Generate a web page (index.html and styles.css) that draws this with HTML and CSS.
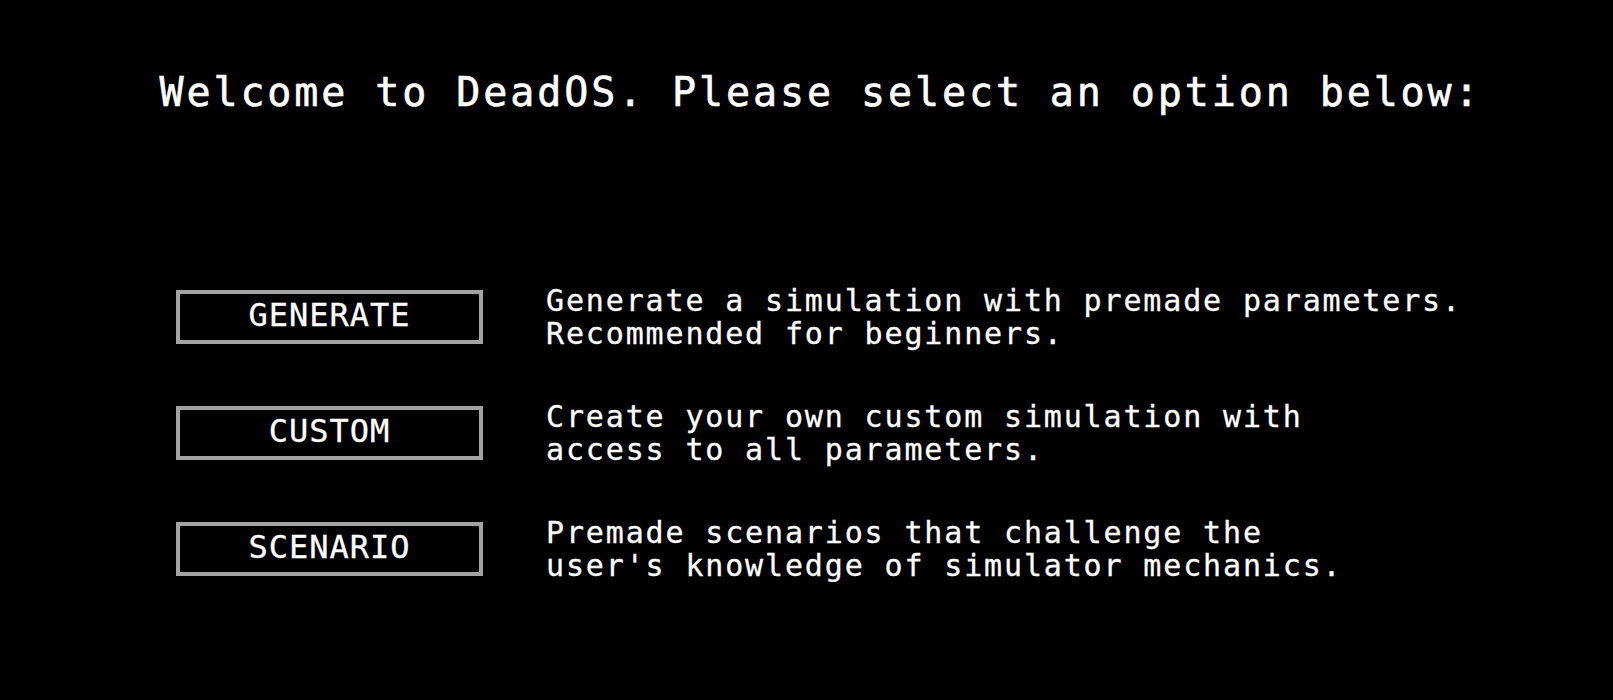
FILE: index.html
```html
<!DOCTYPE html>
<html>

	<head>
		<meta charset="UTF-8">
		<title>DeadOS</title>
		<link rel="stylesheet" href="styles.css">
	</head>

	<body>
		<h1 class="welcome">Welcome to DeadOS. Please select an option below:</h1>
		<div class="menu">
			<div class="menu-row">
				<a href="javascript:;" class="menu-btn">GENERATE</a>
				<p class="menu-desc">Generate a simulation with premade parameters.<br>Recommended for beginners.</p>
			</div>
			<div class="menu-row">
				<a href="javascript:;" class="menu-btn">CUSTOM</a>
				<p class="menu-desc">Create your own custom simulation with<br>access to all parameters.</p>
			</div>
			<div class="menu-row">
				<a href="javascript:;" class="menu-btn">SCENARIO</a>
				<p class="menu-desc">Premade scenarios that challenge the<br>user's knowledge of simulator mechanics.</p>
			</div>
		</div>
	</body>

</html>
```

FILE: styles.css
```css
body {
	margin: 0;
	background: #000;
	color: #fff;
	font-family: "DejaVu Sans Mono", "Liberation Mono", monospace;
}

.welcome {
	margin: 0;
	padding: 68px 0 0 28px;
	font-size: 40px;
	font-weight: normal;
	line-height: 48px;
	letter-spacing: 2.9px;
	text-align: center;
	-webkit-text-stroke: 0.6px #fff;
}

.menu {
	display: flex;
	flex-direction: column;
	gap: 50px;
	margin-top: 168px;
	padding-left: 176px;
}

.menu-row {
	display: flex;
	align-items: center;
	gap: 63px;
}

.menu-btn {
	display: flex;
	align-items: center;
	justify-content: center;
	box-sizing: border-box;
	width: 307px;
	height: 54px;
	padding-bottom: 4px;
	border: 4px solid #a3a3a3;
	color: #fff;
	font-size: 32px;
	letter-spacing: 1px;
	text-decoration: none;
	-webkit-text-stroke: 0.3px #fff;
}

.menu-desc {
	margin: 0;
	font-size: 30px;
	line-height: 33px;
	letter-spacing: 1.85px;
	-webkit-text-stroke: 0.3px #fff;
}
```
